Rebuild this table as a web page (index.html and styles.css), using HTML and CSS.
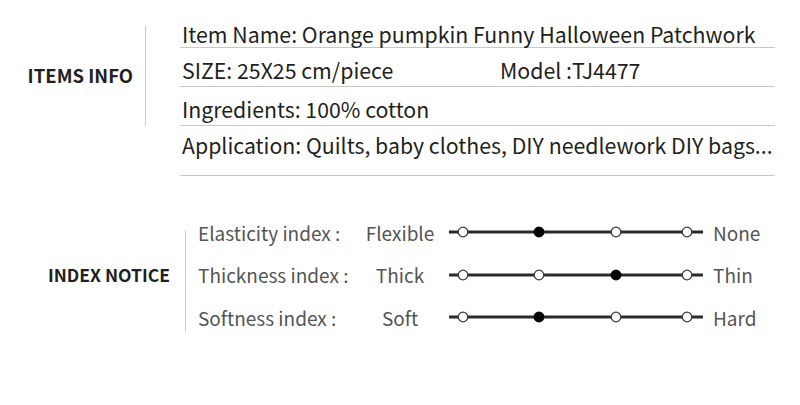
FILE: index.html
```html
<!DOCTYPE html>
<html lang="en">
<head>
<meta charset="utf-8">
<title>Items info</title>
<link rel="stylesheet" href="styles.css">
</head>
<body>
<main class="sheet">
  <section class="block block-info">
    <h2 class="block-title">ITEMS INFO</h2>
    <div class="divider"></div>
    <ul class="info-list">
      <li class="info-row info-row-first">Item Name: Orange pumpkin Funny Halloween Patchwork</li>
      <li class="info-row info-row-split"><span class="info-size">SIZE: 25X25 cm/piece</span><span class="info-model">Model :TJ4477</span></li>
      <li class="info-row">Ingredients: 100% cotton</li>
      <li class="info-row info-row-last">Application: Quilts, baby clothes, DIY needlework DIY bags...</li>
    </ul>
  </section>

  <section class="block block-index">
    <h2 class="block-title">INDEX NOTICE</h2>
    <div class="divider"></div>
    <div class="index-list">
      <div class="index-row">
        <span class="index-label">Elasticity index :</span>
        <span class="index-from">Flexible</span>
        <svg class="scale" width="254" height="12" viewBox="0 0 254 12">
          <line x1="0" y1="6" x2="254" y2="6" class="track"/>
          <circle cx="14" cy="6" r="4.8" class="dot"/>
          <circle cx="90" cy="6" r="4.8" class="dot dot-on"/>
          <circle cx="167" cy="6" r="4.8" class="dot"/>
          <circle cx="238" cy="6" r="4.8" class="dot"/>
        </svg>
        <span class="index-to">None</span>
      </div>
      <div class="index-row">
        <span class="index-label">Thickness index :</span>
        <span class="index-from">Thick</span>
        <svg class="scale" width="254" height="12" viewBox="0 0 254 12">
          <line x1="0" y1="6" x2="254" y2="6" class="track"/>
          <circle cx="14" cy="6" r="4.8" class="dot"/>
          <circle cx="90" cy="6" r="4.8" class="dot"/>
          <circle cx="167" cy="6" r="4.8" class="dot dot-on"/>
          <circle cx="238" cy="6" r="4.8" class="dot"/>
        </svg>
        <span class="index-to">Thin</span>
      </div>
      <div class="index-row">
        <span class="index-label">Softness index :</span>
        <span class="index-from">Soft</span>
        <svg class="scale" width="254" height="12" viewBox="0 0 254 12">
          <line x1="0" y1="6" x2="254" y2="6" class="track"/>
          <circle cx="14" cy="6" r="4.8" class="dot"/>
          <circle cx="90" cy="6" r="4.8" class="dot dot-on"/>
          <circle cx="167" cy="6" r="4.8" class="dot"/>
          <circle cx="238" cy="6" r="4.8" class="dot"/>
        </svg>
        <span class="index-to">Hard</span>
      </div>
    </div>
  </section>
</main>
</body>
</html>
```

FILE: styles.css
```css
html, body {
  margin: 0;
  padding: 0;
  background: #ffffff;
}

body {
  font-family: "Noto Sans CJK SC", "Noto Sans", sans-serif;
  color: #231f20;
}

.sheet {
  width: 800px;
  height: 405px;
}

.block {
  display: flex;
  align-items: flex-start;
}

.block-title {
  margin: 0;
  font-weight: 700;
  line-height: 24px;
  text-align: right;
  color: #231f20;
}

.divider {
  width: 1px;
  background: #cfcfcf;
}

/* ---------- items info ---------- */
.block-info {
  padding-top: 10px;
}

.block-info .block-title {
  width: 133px;
  font-size: 18.5px;
  margin-top: 53px;
  margin-right: 12px;
}

.block-info .divider {
  height: 101px;
  margin-top: 15px;
}

.info-list {
  list-style: none;
  margin: 0 0 0 34px;
  padding: 0;
  width: 595px;
}

.info-row {
  font-size: 21.3px;
  line-height: 24px;
  padding: 10px 0 4px 2px;
  border-bottom: 1px solid #c8c8c8;
  white-space: nowrap;
  color: #231f20;
}

.info-row-first {
  padding-top: 12px;
  padding-bottom: 1px;
}

.info-row-last {
  padding-top: 7px;
  padding-bottom: 18px;
}

.info-row-split {
  display: flex;
}

.info-size {
  width: 318px;
}

/* ---------- index notice ---------- */
.block-index {
  margin-top: 35px;
}

.block-index .block-title {
  width: 170px;
  font-size: 17.5px;
  margin-top: 52px;
  margin-right: 15px;
}

.block-index .divider {
  height: 101px;
  margin-top: 20px;
}

.index-list {
  margin-left: 12px;
  display: flex;
  flex-direction: column;
}

.index-row {
  display: flex;
  align-items: center;
  height: 42.5px;
  font-size: 19px;
  color: #555555;
  white-space: nowrap;
}

.index-label {
  width: 160px;
}

.index-from {
  width: 84px;
  text-align: center;
  margin-right: 7px;
}

.scale {
  display: block;
  margin-right: 10px;
}

.track {
  stroke: #2b2b2b;
  stroke-width: 3;
}

.dot {
  fill: #ffffff;
  stroke: #3a3a3a;
  stroke-width: 1.3;
}

.dot-on {
  fill: #000000;
  stroke: #000000;
}
```
